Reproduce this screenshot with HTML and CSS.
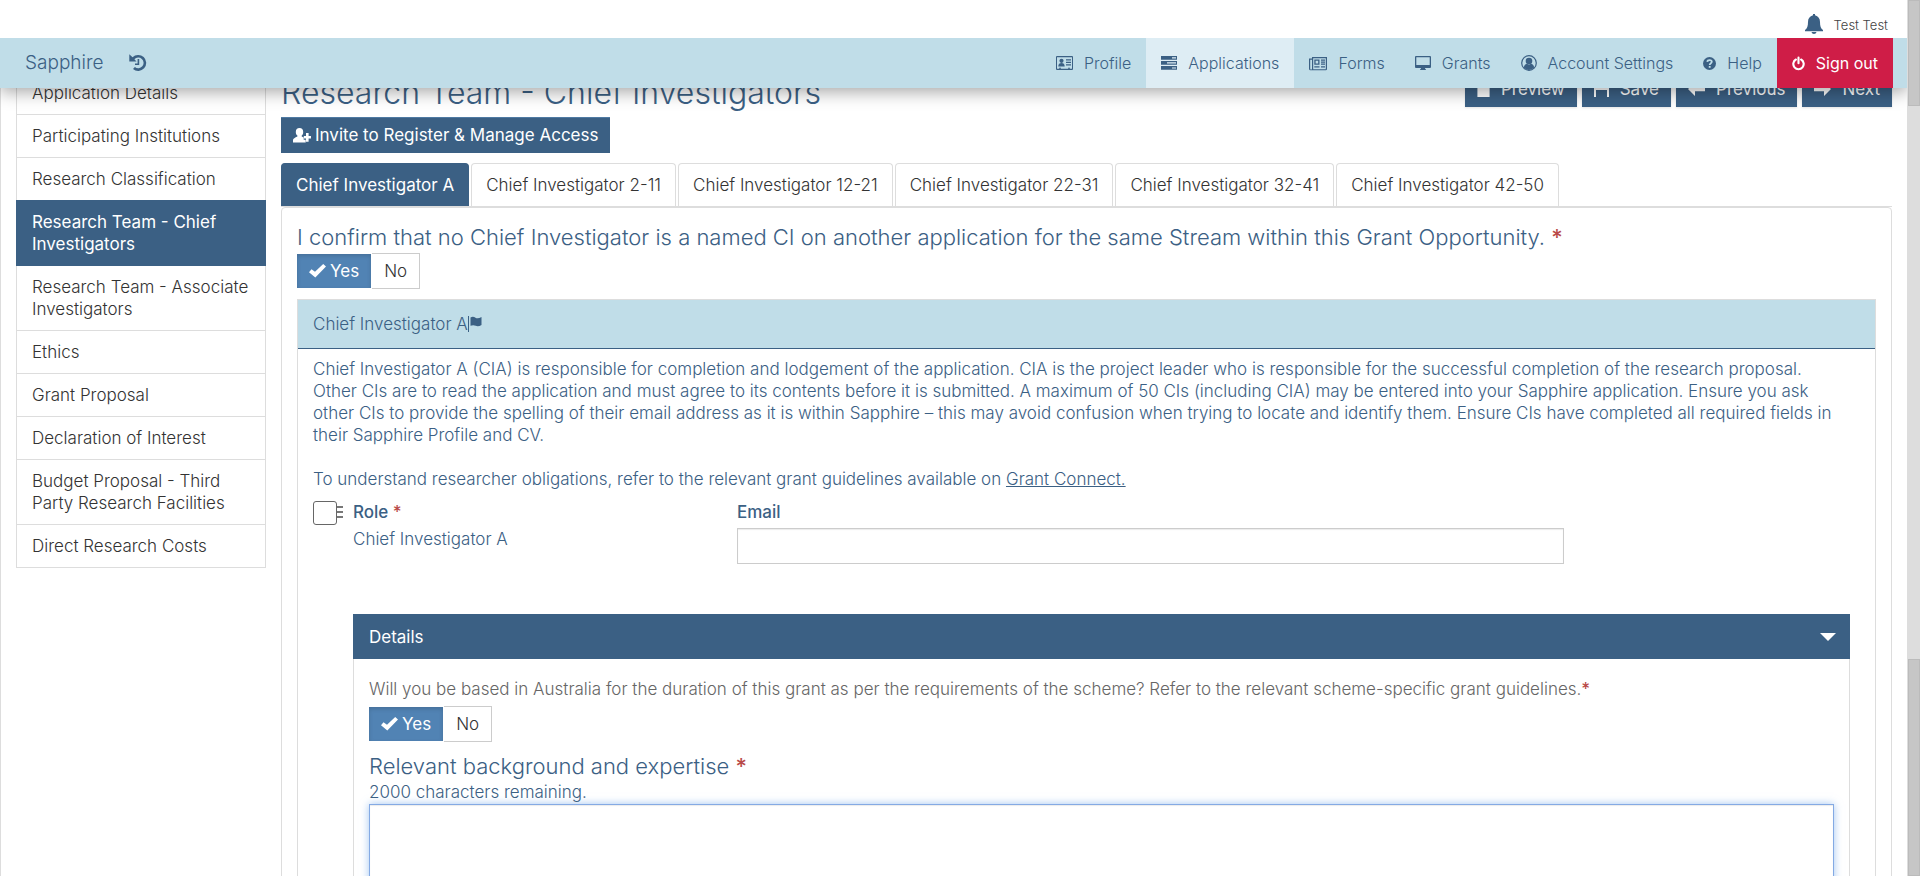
FILE: index.html
```html
<!DOCTYPE html>
<html lang="en">
<head>
<meta charset="utf-8">
<title>Sapphire - Research Team - Chief Investigators</title>
<link rel="stylesheet" href="styles.css">
</head>
<body>
<div class="app">
  <header class="header">
    <div class="userbar">
      <svg class="bell" viewBox="0 0 18 20" aria-hidden="true"><path d="M8 0h2v1.2C13.300 2 15 4.500 15 8c0 4 .8 6.500 3 8v1.200H0V16c2.200-1.500 3-4 3-8 0-3.500 1.700-6 5-6.800zM6.500 18h5c-.3 1.200-1.200 2-2.500 2s-2.200-.8-2.500-2z"/></svg>
      <span>Test Test</span>
    </div>
    <nav class="nav">
      <a class="brand" href="#">Sapphire</a>
      <a class="history" href="#" aria-label="History"><svg viewBox="0 0 18 18"><path d="M3.500 3.300A8 8 0 1 1 4 15l1.900-2a5.300 5.300 0 1 0-.5-7.700L7.500 7.500H.3V.3z"/><path d="M8.600 5h1.600v6H6V9.400h2.600z"/></svg></a>
      <ul class="menu">
        <li><a href="#"><svg class="i17" viewBox="0 0 17 14"><path fill-rule="evenodd" d="M1 0h15a1 1 0 0 1 1 1v12a1 1 0 0 1-1 1H1a1 1 0 0 1-1-1V1a1 1 0 0 1 1-1zm0 1.200v11.600h15V1.200z"/><circle cx="5.500" cy="4.800" r="2.100"/><path d="M2.300 10.500C2.300 8 3.500 7 5.500 7s3.200 1 3.200 3.500zM10 3.300h5v1.200h-5zM10 5.800h5V7h-5zM10 8.300h5v1.200h-5zM3 11.800h2v1H3zM12 11.800h2v1h-2z"/></svg>Profile</a></li>
        <li class="current"><a href="#"><svg class="i16" viewBox="0 0 16 14"><path fill-rule="evenodd" d="M0 0h16v3.800H0zM11 1.200v1.300h4V1.200zM0 5h16v3.800H0zM6 6.200v1.300h9V6.200zM0 10h16v3.800H0zM11 11.400v1.200h4v-1.200z"/></svg>Applications</a></li>
        <li><a href="#"><svg class="i18" viewBox="0 0 18 14"><path fill-rule="evenodd" d="M3 .5h15v12a1.300 1.300 0 0 1-1.300 1.300H1.500A1.500 1.500 0 0 1 0 12.300V2h3zm1.200 1.200v11h12.600v-11zM1.200 3.200v9a.9.9 0 0 0 1.800 0v-9zM5.300 3h5.200v5.300H5.300zm1.300 1.300V7h2.600V4.300z"/><path d="M12 3h4v1.200h-4zM12 5h4v1.200h-4zM12 7.100h4v1.200h-4zM5.300 9.700h5.200v1.200H5.300zM12 9.700h4v1.200h-4z"/></svg>Forms</a></li>
        <li><a href="#"><svg class="i16" viewBox="0 0 16 14"><path fill-rule="evenodd" d="M1 0h14a1 1 0 0 1 1 1v10a1 1 0 0 1-1 1h-5l.3 1.200h.7v.8H5v-.8h.7L6 12H1a1 1 0 0 1-1-1V1a1 1 0 0 1 1-1zm.3 1.200V9h13.400V1.200z"/></svg>Grants</a></li>
        <li><a href="#"><svg class="i16" viewBox="0 0 16 16"><circle cx="8" cy="8" r="7.300" fill="none" stroke="currentColor" stroke-width="1.200"/><circle cx="8" cy="6" r="3.300"/><path d="M2.800 12.500C3.200 10 4.700 9 6 8.800c1.200 1 2.800 1 4 0 1.300.2 2.800 1.200 3.200 3.700A7 7 0 0 1 8 15a7 7 0 0 1-5.200-2.500z"/></svg>Account Settings</a></li>
        <li><a href="#"><svg class="i13" viewBox="0 0 14 14"><circle cx="7" cy="7" r="7"/><path fill="none" stroke="#c0dde8" stroke-width="1.900" d="M4.600 5.200C4.800 2.800 9.500 2.800 9.500 5.200 9.500 6.800 7.200 6.600 7.200 8.700"/><path fill="#c0dde8" d="M6.200 9.700h2v1.900h-2z"/></svg>Help</a></li>
        <li class="signout"><a href="#"><svg class="i13" viewBox="0 0 14 15"><path fill="none" stroke="currentColor" stroke-width="2.300" stroke-linecap="round" d="M4.200 3.200a5.600 5.600 0 1 0 5.600 0M7 1.200v6"/></svg>Sign out</a></li>
      </ul>
    </nav>
  </header>

  <div class="page">
    <aside class="sidebar">
      <a href="#">Application Details</a>
      <a href="#">Participating Institutions</a>
      <a href="#">Research Classification</a>
      <a class="active" href="#">Research Team - Chief Investigators</a>
      <a href="#">Research Team - Associate Investigators</a>
      <a href="#">Ethics</a>
      <a href="#">Grant Proposal</a>
      <a href="#">Declaration of Interest</a>
      <a href="#">Budget Proposal - Third Party Research Facilities</a>
      <a href="#">Direct Research Costs</a>
    </aside>

    <main class="main">
      <div class="titlebar">
        <h1>Research Team - Chief Investigators</h1>
        <div class="actions">
          <button class="btn" type="button"><svg class="i13" viewBox="0 0 13 16"><path d="M0 0h8v5h5v11H0zM9 0l4 4H9z"/></svg>Preview</button>
          <button class="btn" type="button"><svg class="i15" viewBox="0 0 15 15"><path fill-rule="evenodd" d="M0 0h3v4h8V0h2l2 2v13h-2V8H2v7H0zM8 0h2v3H8z"/></svg>Save</button>
          <button class="btn" type="button"><svg class="i17" viewBox="0 0 17 14"><path d="M0 7l7-7v4.700h10v4.600H7V14z"/></svg>Previous</button>
          <button class="btn" type="button"><svg class="i17" viewBox="0 0 17 14"><path d="M17 7l-7-7v4.700H0v4.600h10V14z"/></svg>Next</button>
        </div>
      </div>
      <div><button class="btn invite" type="button"><svg class="i18" viewBox="0 0 18 15"><path d="M6.500 0c2.400 0 3.700 1.600 3.700 3.900 0 1.600-.6 2.900-1.500 3.700v1l2 .9v2.300h2v2.700H0v-2.400c0-1.600 2-2.200 4.400-3.500v-1C3.400 6.800 2.800 5.500 2.800 3.900 2.800 1.600 4.100 0 6.500 0z"/><path d="M13 5h2.600v3H18v2.500h-2.400v3.200H13v-3.200h-2.200V8H13z"/></svg>Invite to Register &amp; Manage Access</button></div>

      <div class="tabs" role="tablist">
        <button class="tab active" type="button" role="tab" aria-selected="true">Chief Investigator A</button>
        <button class="tab" type="button" role="tab">Chief Investigator 2-11</button>
        <button class="tab" type="button" role="tab">Chief Investigator 12-21</button>
        <button class="tab" type="button" role="tab">Chief Investigator 22-31</button>
        <button class="tab" type="button" role="tab">Chief Investigator 32-41</button>
        <button class="tab" type="button" role="tab">Chief Investigator 42-50</button>
      </div>

      <div class="panel">
        <p class="question">I confirm that no Chief Investigator is a named CI on another application for the same Stream within this Grant Opportunity. <span class="req">*</span></p>
        <div class="toggle">
          <button class="yes" type="button" aria-pressed="true"><svg class="tick" viewBox="0 0 17 14"><path d="M0 8.200l2.500-2.900 3.500 2.500L14.200 0 17 2.500 6.300 13.500z"/></svg>Yes</button><button class="no" type="button">No</button>
        </div>

        <section class="card">
          <h2 class="card-head">Chief Investigator A<svg class="flag" viewBox="0 0 14 16"><path d="M0 0h1v16H0zM2.500 1.500C4.500.300 6 .8 7.500 1.700S11 2.400 13.500 1v8c-2 1.200-4 1.600-5.800.8S4.500 9 2.500 9.800z"/></svg></h2>
          <div class="card-body">
            <p>Chief Investigator A (CIA) is responsible for completion and lodgement of the application. CIA is the project leader who is responsible for the successful completion of the research proposal.<br>Other CIs are to read the application and must agree to its contents before it is submitted. A maximum of 50 CIs (including CIA) may be entered into your Sapphire application. Ensure you ask<br>other CIs to provide the spelling of their email address as it is within Sapphire – this may avoid confusion when trying to locate and identify them. Ensure CIs have completed all required fields in<br>their Sapphire Profile and CV.</p>
            <p>To understand researcher obligations, refer to the relevant grant guidelines available on <a class="link" href="#">Grant Connect.</a></p>
            <div class="row">
              <div class="select">
                <input class="check" type="checkbox" aria-label="Select Chief Investigator A">
                <svg class="handle" viewBox="0 0 6 12"><path d="M0 0h6v2H0zM0 5h6v2H0zM0 10h6v2H0z"/></svg>
              </div>
              <div class="fields">
                <div class="line">
                  <div>
                    <div class="label">Role <span class="req">*</span></div>
                    <div class="value">Chief Investigator A</div>
                  </div>
                  <div>
                    <label class="label" for="email">Email</label>
                    <input class="input" id="email" type="text">
                  </div>
                </div>
                <section class="details">
                  <button class="details-head" type="button" aria-expanded="true">Details<svg class="caret" viewBox="0 0 16 8"><path d="M0 0h16L8 8z"/></svg></button>
                  <div class="details-body">
                    <p class="ask">Will you be based in Australia for the duration of this grant as per the requirements of the scheme? Refer to the relevant scheme-specific grant guidelines.<span class="req">*</span></p>
                    <div class="toggle">
                      <button class="yes" type="button" aria-pressed="true"><svg class="tick" viewBox="0 0 17 14"><path d="M0 8.200l2.500-2.900 3.500 2.500L14.200 0 17 2.500 6.300 13.500z"/></svg>Yes</button><button class="no" type="button">No</button>
                    </div>
                    <label class="question" for="background">Relevant background and expertise <span class="req">*</span></label>
                    <div class="remaining">2000 characters remaining.</div>
                    <textarea class="area" id="background"></textarea>
                  </div>
                </section>
              </div>
            </div>
          </div>
        </section>
      </div>
    </main>
  </div>
</div>
<div class="scroll" aria-hidden="true"><div class="thumb-top"></div><div class="thumb-low"></div></div>
</body>
</html>
```
FILE: styles.css
```css
* { box-sizing: border-box; }
body {
  margin: 0;
  height: 100vh;
  overflow: hidden;
  display: grid;
  grid-template-columns: 1fr 13px;
  background: #fff;
  color: #3b6084;
  font: 300 17px/22px Inter, "Liberation Sans", sans-serif;
}
button, input, textarea { font: inherit; color: inherit; }
h1, h2, p, ul { margin: 0; padding: 0; }
svg { fill: currentColor; flex: none; }
a { color: inherit; text-decoration: none; }

.app { min-width: 0; height: 100vh; overflow: hidden; display: flex; flex-direction: column; }
.header { position: relative; z-index: 2; flex: none; background: #fff; box-shadow: 0 4px 16px rgba(0,0,0,.35); }
.userbar {
  height: 38px;
  padding: 12px 19px 0 0;
  display: flex;
  justify-content: flex-end;
  gap: 11px;
  color: #3b6084;
  font-size: 13px;
  line-height: 26px;
}
.userbar span { color: #444; }
.bell { width: 18px; height: 20px; margin-top: 2px; }
.nav { display: flex; height: 50px; background: #c0dde8; padding: 0 14px 0 25px; align-items: center; }
.brand { font-size: 19px; }
.history { margin-left: 26px; display: flex; }
.history svg { width: 18px; height: 18px; }
.menu { list-style: none; display: flex; margin-left: auto; font-size: 16px; }
.menu a { display: flex; align-items: center; gap: 11px; height: 50px; padding: 0 15px; }
.current { background: #deedf4; }
.signout { background: #cf1d47; color: #fff; font-weight: 400; }
.i13 { width: 13px; height: 15px; }
.i15 { width: 15px; height: 15px; }
.i16 { width: 16px; height: 16px; }
.i17 { width: 17px; height: 14px; }
.i18 { width: 18px; height: 15px; }

.page {
  flex: 1;
  min-height: 0;
  display: flex;
  align-items: flex-start;
  gap: 15px;
  padding: 0 15px;
  border-left: 1px solid #ddd;
}
.sidebar { flex: none; width: 250px; margin-top: -17px; border: 1px solid #ddd; color: #333; }
.sidebar a { display: block; padding: 10px 14px 10px 15px; border-bottom: 1px solid #ddd; }
.sidebar a:last-child { border-bottom: 0; }
.sidebar .active { background: #3b6084; color: #fff; font-weight: 400; margin: -1px -1px 0; padding: 11px 15px 11px 16px; border: 0; }

.main { flex: 1; min-width: 0; margin-top: -17px; }
.titlebar { display: flex; justify-content: space-between; height: 46px; }
h1 { font-size: 32px; line-height: 44px; font-weight: 300; }
.actions { display: flex; gap: 5px; align-items: flex-start; }
.btn {
  display: flex;
  align-items: center;
  gap: 11px;
  height: 36px;
  padding: 0 12px;
  border: 0;
  background: #3b6084;
  color: #fff;
  font-weight: 400;
  box-shadow: 0 1px 2px rgba(0,0,0,.1);
}
.invite { gap: 4px; box-shadow: inset 0 2px 0 -1px #4f7aa3; }

.tabs { display: flex; gap: 2px; margin-top: 10px; border-bottom: 1px solid #ddd; }
.tab {
  height: 43px;
  padding: 0 14px;
  border: 1px solid #ddd;
  border-bottom: 0;
  border-radius: 4px 4px 0 0;
  background: #fff;
  color: #333;
  font-weight: 300;
}
.tab.active { background: #3b6084; border-color: #3b6084; color: #fff; font-weight: 400; }

.panel { border: 1px solid #ddd; border-radius: 4px; padding: 15px 15px 0; min-height: 800px; }
.question { display: block; font-size: 22px; line-height: 28px; }
.req { color: #b94a48; font-weight: 500; }
.toggle { display: flex; gap: 1px; margin-top: 2px; }
.yes, .no { height: 36px; border: 0; padding: 0 12px; }
.yes { display: flex; align-items: center; gap: 4px; background: #5183b4; color: #fff; font-weight: 400; border-top: 1px solid #fff; border-bottom: 1px solid #fff; box-shadow: inset 0 2px 4px rgba(0,0,0,.15); }
.no { background: #fff; border: 1px solid #ccc; color: #333; border-left: 0; }
.tick { width: 17px; height: 14px; }

.card { margin-top: 10px; border: 1px solid #ddd; min-height: 700px; }
.card-head { display: flex; align-items: center; height: 49px; padding: 0 15px; background: #c0dde8; border-bottom: 1px solid #3b6084; font-size: 17px; font-weight: 300; }
.flag { width: 14px; height: 16px; }
.card-body { padding: 9px 15px 0; }
.card-body p + p { margin-top: 22px; }
.card-body p { white-space: nowrap; }
.link { text-decoration: underline; }
.row { display: flex; gap: 10px; margin-top: 11px; }
.select { display: flex; align-items: flex-start; width: 30px; }
.check { appearance: none; width: 24px; height: 24px; margin: 0; flex: none; border: 1px solid #666; border-radius: 3px; background: #fff; }
.handle { width: 6px; height: 12px; margin-top: 5px; color: #777; }
.fields { flex: 1; min-width: 0; padding-right: 10px; }
.line { display: grid; grid-template-columns: 384px minmax(0, 827px); height: 113px; align-items: start; }
.label { display: block; font-weight: 500; }
.value { margin-top: 5px; }
.input { display: block; width: 100%; height: 36px; margin-top: 5px; border: 1px solid #ccc; background: #fff; box-shadow: inset 0 1px 1px rgba(0,0,0,.08); }
.details { border: 1px solid #ddd; border-top: 0; }
.details-head { display: flex; align-items: center; justify-content: space-between; width: calc(100% + 2px); margin: 0 -1px; height: 45px; padding: 0 14px 0 16px; border: 0; background: #3b6084; color: #fff; font-weight: 400; }
.caret { width: 16px; height: 8px; }
.details-body { padding: 19px 15px 0; }
.ask { color: #666; margin-bottom: 6px; }
.details-body .question { margin-top: 10px; }
.remaining { margin-top: 1px; }
.area { display: block; width: 100%; height: 200px; margin-top: 1px; border: 1px solid #84aae4; outline: 0; resize: none; background: #fff; box-shadow: inset 0 1px 1px rgba(0,0,0,.08), 0 0 8px rgba(102,160,233,.6); }

.scroll { display: flex; flex-direction: column; justify-content: space-between; background: #ddd; padding-left: 1px; }
.thumb-top { height: 106px; background: #c6c6c6; border: 1px solid #bbb; }
.thumb-low { height: 217px; background: #c6c6c6; border: 1px solid #bbb; }
```
